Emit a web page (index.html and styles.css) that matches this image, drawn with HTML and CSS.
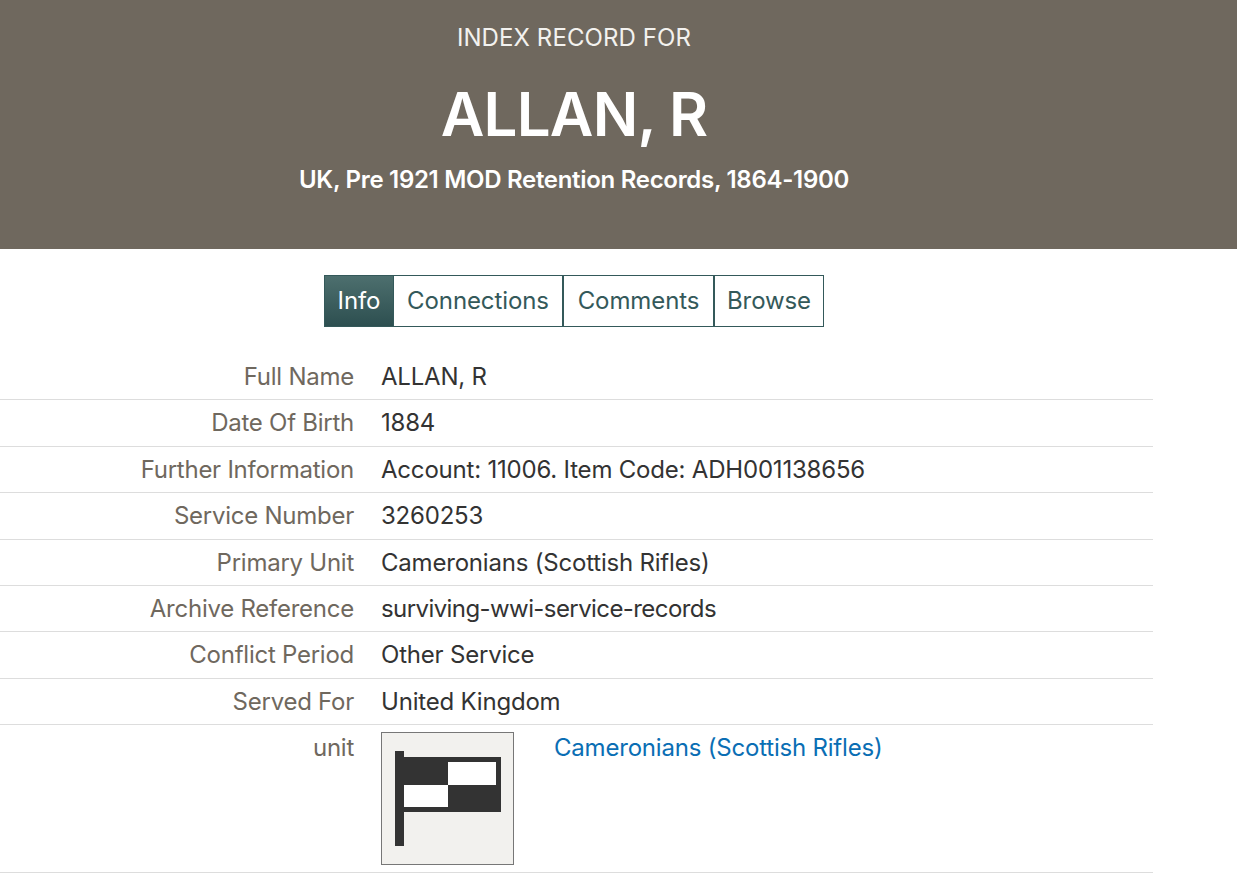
FILE: index.html
```html
<!DOCTYPE html>
<html lang="en">
<head>
    <meta charset="UTF-8">
    <title>ALLAN, R</title>
    <link rel="stylesheet" href="styles.css">
</head>
<body>
    <header class="banner">
        <div class="banner-inner">
            <div class="eyebrow">INDEX RECORD FOR</div>
            <h1>ALLAN, R</h1>
            <div class="collection">UK, Pre 1921 MOD Retention Records, 1864-1900</div>
        </div>
    </header>
    <main class="content">
        <nav class="tabs">
            <a class="tab active" href="#">Info</a>
            <a class="tab" href="#">Connections</a>
            <a class="tab" href="#">Comments</a>
            <a class="tab" href="#">Browse</a>
        </nav>
        <div class="record">
            <div class="row"><div class="label">Full Name</div><div class="value">ALLAN, R</div></div>
            <div class="row"><div class="label">Date Of Birth</div><div class="value">1884</div></div>
            <div class="row"><div class="label">Further Information</div><div class="value">Account: 11006. Item Code: ADH001138656</div></div>
            <div class="row"><div class="label">Service Number</div><div class="value">3260253</div></div>
            <div class="row"><div class="label">Primary Unit</div><div class="value">Cameronians (Scottish Rifles)</div></div>
            <div class="row"><div class="label">Archive Reference</div><div class="value slug">surviving-wwi-service-records</div></div>
            <div class="row"><div class="label">Conflict Period</div><div class="value">Other Service</div></div>
            <div class="row"><div class="label">Served For</div><div class="value">United Kingdom</div></div>
            <div class="row unit-row">
                <div class="label">unit</div>
                <div class="value unit">
                    <div class="unit-icon">
                        <svg width="131" height="131" viewBox="0 0 131 131">
                            <rect x="13" y="18" width="9" height="95" fill="#333"/>
                            <rect x="22" y="24" width="97" height="55" fill="#333"/>
                            <rect x="66" y="29" width="48" height="23" fill="#fff"/>
                            <rect x="22" y="52" width="44" height="22" fill="#fff"/>
                        </svg>
                    </div>
                    <a class="unit-link" href="#">Cameronians (Scottish Rifles)</a>
                </div>
            </div>
        </div>
    </main>
</body>
</html>
```

FILE: styles.css
```css
body {
    margin: 0;
    font-family: Inter, "Liberation Sans", sans-serif;
    color: #333;
    background-color: white;
}
.banner {
    background-color: #6f685e;
    color: white;
    height: 249px;
}
.banner-inner {
    width: 1148px;
    text-align: center;
    padding-top: 24px;
}
.eyebrow {
    font-size: 24px;
    line-height: 28px;
    letter-spacing: 0.1px;
    color: #f3f2ef;
}
h1 {
    margin: 26px 0 0;
    font-size: 60px;
    line-height: 72px;
    font-weight: 600;
    letter-spacing: -0.8px;
}
.collection {
    margin-top: 15px;
    font-size: 24px;
    line-height: 30px;
    font-weight: 600;
    letter-spacing: -0.3px;
}
.content {
    width: 1153px;
}
.tabs {
    display: flex;
    justify-content: center;
    padding-top: 26px;
    margin-bottom: 27px;
    padding-right: 5px;
}
.tab {
    display: block;
    box-sizing: border-box;
    height: 52px;
    line-height: 50px;
    text-align: center;
    font-size: 24px;
    letter-spacing: -0.1px;
    color: #34595a;
    text-decoration: none;
    border: 1px solid #34595a;
}
.tab:nth-child(1) {
    width: 70px;
}
.tab:nth-child(2) {
    width: 169px;
    border-left-width: 0;
}
.tab:nth-child(3) {
    width: 151px;
}
.tab:nth-child(4) {
    width: 110px;
}
.tab.active {
    color: white;
    background: linear-gradient(#4d6f6e, #2d4f50);
}
.row {
    display: flex;
    height: 45.4px;
    border-bottom: 1px solid #ddd;
    font-size: 24px;
    line-height: 45px;
}
.label {
    width: 354px;
    text-align: right;
    color: #6f685e;
    letter-spacing: -0.25px;
}
.value {
    margin-left: 27px;
    letter-spacing: -0.2px;
}
.value.slug {
    letter-spacing: -0.58px;
}
.unit-row {
    height: 147px;
}
.unit {
    display: flex;
    align-items: flex-start;
}
.unit-icon {
    width: 131px;
    height: 131px;
    margin-top: 7px;
    background-color: #f2f1ee;
    border: 1px solid #777;
}
.unit-icon svg {
    display: block;
}
.unit-link {
    margin-left: 40px;
    color: #0a6eb4;
    text-decoration: none;
}
```
